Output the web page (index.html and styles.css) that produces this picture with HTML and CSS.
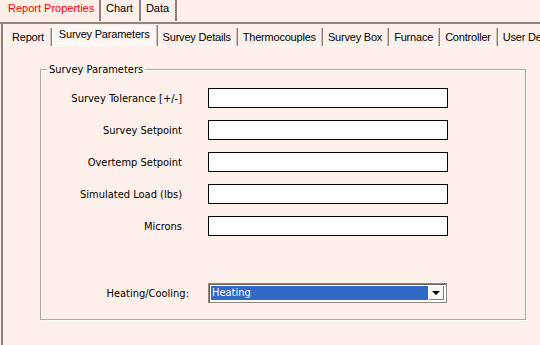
FILE: index.html
```html
<!DOCTYPE html>
<html lang="en">
<head>
    <meta charset="UTF-8">
    <title>Report Properties</title>
    <link rel="stylesheet" href="styles.css">
</head>
<body>
    <div class="outer-tabs">
        <div class="outer-tab active">Report Properties</div>
        <div class="outer-tab">Chart</div>
        <div class="outer-tab">Data</div>
    </div>

    <div class="panel">
        <div class="inner-tabs">
            <div class="inner-tab first">Report</div>
            <div class="inner-tab active">Survey Parameters</div>
            <div class="inner-tab">Survey Details</div>
            <div class="inner-tab">Thermocouples</div>
            <div class="inner-tab">Survey Box</div>
            <div class="inner-tab">Furnace</div>
            <div class="inner-tab">Controller</div>
            <div class="inner-tab">User Defined</div>
        </div>

        <fieldset class="group">
            <legend>Survey Parameters</legend>
            <div class="form-grid">
                <label>Survey Tolerance [+/-]</label>
                <div class="text-box"></div>
                <label>Survey Setpoint</label>
                <div class="text-box"></div>
                <label>Overtemp Setpoint</label>
                <div class="text-box"></div>
                <label>Simulated Load (lbs)</label>
                <div class="text-box"></div>
                <label>Microns</label>
                <div class="text-box"></div>
            </div>
            <div class="combo-row">
                <label>Heating/Cooling:</label>
                <div class="combo">
                    <div class="combo-value">Heating</div>
                    <div class="combo-btn"><span class="arrow"></span></div>
                </div>
            </div>
        </fieldset>
    </div>
</body>
</html>
```

FILE: styles.css
```css
body {
    margin: 0;
    width: 540px;
    height: 345px;
    overflow: hidden;
    background-color: #fdf0ea;
    font-family: "DejaVu Sans Condensed", "DejaVu Sans", sans-serif;
    font-size: 11px;
    color: #000;
}

/* tab strips use the narrower system font */
.outer-tabs,
.inner-tabs {
    font-family: "Liberation Sans", Arial, sans-serif;
}

.outer-tabs {
    display: flex;
    height: 22px;
    border-bottom: 2px solid #8f8680;
}

.outer-tab {
    flex-shrink: 0;
    white-space: nowrap;
    height: 21px;
    line-height: 16px;
    padding: 0 6px 0 5px;
    border-right: 2px solid #8a817c;
}

.outer-tab.active {
    width: 91px;
    padding-left: 8px;
    padding-right: 0;
    color: #ff0000;
    background-color: #fdeee8;
}

.panel {
    height: 321px;
    margin-left: 1px;
    border-left: 2px solid #8a807b;
    overflow: hidden;
}

.inner-tabs {
    display: flex;
    align-items: flex-end;
    height: 22px;
    padding-left: 1px;
    border-bottom: 1px solid #fffaf7;
    letter-spacing: -0.2px;
}

.inner-tab {
    flex-shrink: 0;
    white-space: nowrap;
    height: 18px;
    line-height: 19px;
    padding: 0 6px 0 5px;
    border-right: 1px solid #8a817c;
    box-shadow: inset -1px 0 #c8c0bb;
}

.inner-tab.first {
    padding: 0 7px 0 7px;
    border-left: 1px solid #fffaf7;
}

.inner-tab.active {
    height: 21px;
    line-height: 18px;
    padding: 0 7px 0 6px;
    background-color: #fef6f2;
    border-left: 1px solid #ffffff;
}

.group {
    width: 486px;
    height: 257px;
    margin: 16px 0 0 37px;
    padding: 0;
    border: 1px solid #aea7a2;
    box-shadow: 1px 1px 0 #ffffff, inset 1px 1px 0 #ffffff;
    box-sizing: border-box;
}

.group legend {
    margin-left: 6px;
    padding: 0 2px;
}

.form-grid {
    display: grid;
    grid-template-columns: 141px 240px;
    column-gap: 26px;
    row-gap: 12px;
    align-items: center;
    margin-top: 12px;
}

.form-grid label {
    text-align: right;
}

.text-box {
    height: 20px;
    border: 1px solid #000;
    background-color: #fff;
    box-sizing: border-box;
}

.combo-row {
    display: grid;
    grid-template-columns: 148px 239px;
    column-gap: 19px;
    align-items: center;
    margin-top: 47px;
}

.combo-row label {
    text-align: right;
}

.combo {
    display: flex;
    height: 20px;
    padding: 2px;
    box-sizing: border-box;
    background-color: #fff;
    border: 1px solid #8e8680;
    box-shadow: inset 1px 1px 0 #6b6360;
}

.combo-value {
    flex: 1;
    background-color: #316ac5;
    color: #fff;
    line-height: 14px;
    padding-left: 1px;
}

.combo-btn {
    width: 15px;
    margin-left: 1px;
    display: flex;
    align-items: center;
    justify-content: center;
    background-color: #fbf4ef;
    border-right: 1px solid #8a817c;
    border-bottom: 1px solid #8a817c;
    box-sizing: border-box;
}

.arrow {
    width: 0;
    height: 0;
    border-left: 4px solid transparent;
    border-right: 4px solid transparent;
    border-top: 4px solid #000;
}
```
